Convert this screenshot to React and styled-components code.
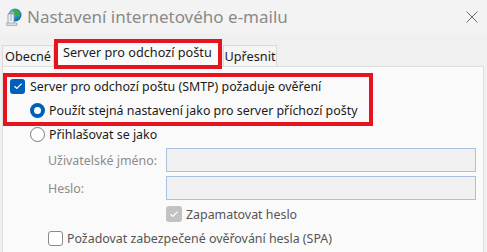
import styled, { createGlobalStyle } from "styled-components";

const GlobalStyle = createGlobalStyle`
  html, body {
    margin: 0;
    padding: 0;
    background: #f0f0f0;
  }
  body {
    font-family: "Noto Sans", "Open Sans", sans-serif;
    font-size: 12.4px;
    color: #1b1b1b;
    white-space: nowrap;
  }
`;

const Window = styled.div`
  width: 487px;
  height: 252px;
  overflow: hidden;
  display: flex;
  flex-direction: column;
  background: #f0f0f0;
`;

const TitleBar = styled.div`
  height: 33px;
  flex: none;
  display: flex;
  align-items: center;
  padding: 0 8px 0 5px;
  background: #f3f3f3;
`;

const Title = styled.span`
  margin-left: 5px;
  font-size: 17px;
  color: #8a8a8a;
  flex: 1;
`;

const CloseButton = styled.button`
  width: 14px;
  height: 14px;
  padding: 0;
  border: none;
  background: none;
  display: flex;
  align-items: center;
  justify-content: center;
`;

const TabArea = styled.div`
  flex: 1;
  display: flex;
  flex-direction: column;
  padding: 6px 3px 0 2px;
`;

const TabStrip = styled.div`
  display: flex;
  align-items: flex-end;
  height: 27px;
  flex: none;
`;

const Tab = styled.div`
  box-sizing: border-box;
  width: ${(p) => p.$w}px;
  height: 21px;
  display: flex;
  align-items: center;
  justify-content: center;
  border: 1px solid #dadada;
  border-bottom: none;
  background: #f5f5f5;
  font-size: 12.7px;
  margin-left: ${(p) => p.$gap || 0}px;
`;

const ActiveTab = styled.div`
  position: relative;
  z-index: 1;
  box-sizing: border-box;
  height: 30px;
  margin-bottom: -3px;
  padding: 0 0 4px 5px;
  width: 168px;
  display: flex;
  align-items: center;
  border: 4px solid #e5141f;
  background: #fafafa;
  font-size: 12.7px;
`;

const Panel = styled.div`
  flex: 1;
  box-sizing: border-box;
  border: 1px solid #dedede;
  border-bottom: none;
  background: #fafafa;
  display: flex;
  flex-direction: column;
  padding-top: 6px;
`;

const Highlight = styled.div`
  box-sizing: border-box;
  width: 370px;
  border: 4px solid #e5141f;
  padding: 1px 0 4px 3px;
  display: flex;
  flex-direction: column;
  gap: 8px;
`;

const Row = styled.div`
  display: flex;
  align-items: center;
  height: ${(p) => p.$h || 16}px;
  margin-left: ${(p) => p.$indent || 0}px;
  margin-top: ${(p) => p.$top || 0}px;
  gap: ${(p) => p.$gap ?? 4}px;
  color: ${(p) => p.$color || "#1b1b1b"};
`;

const Label = styled.span`
  width: 118px;
  flex: none;
  color: #8c8c8c;
`;

const Input = styled.div`
  box-sizing: border-box;
  width: 310px;
  height: 24px;
  background: #f0f0f0;
  border: 1px solid #a9c1de;
`;

const Check = styled.span`
  box-sizing: border-box;
  width: ${(p) => p.$size || 15}px;
  height: ${(p) => p.$size || 15}px;
  flex: none;
  border-radius: 3px;
  display: flex;
  align-items: center;
  justify-content: center;
  background: ${(p) =>
    p.$state === "on" ? "#005fb8" : p.$state === "disabled" ? "#c2c2c2" : "#ffffff"};
  border: ${(p) => (p.$state === "off" ? "1px solid #8a8a8a" : "none")};
`;

const Radio = styled.span`
  box-sizing: border-box;
  width: 15px;
  height: 15px;
  flex: none;
  border-radius: 50%;
  display: flex;
  align-items: center;
  justify-content: center;
  background: ${(p) => (p.$on ? "#005fb8" : "#ffffff")};
  border: ${(p) => (p.$on ? "none" : "1px solid #7a7a7a")};
  &::after {
    content: "";
    display: ${(p) => (p.$on ? "block" : "none")};
    width: 7px;
    height: 7px;
    border-radius: 50%;
    background: #ffffff;
  }
`;

const Tick = () => (
  <svg width="10" height="8" viewBox="0 0 10 8">
    <path d="M1.5 4.2 L3.9 6.4 L8.6 1.6" fill="none" stroke="#fff" strokeWidth="1.2" />
  </svg>
);

const AppIcon = () => (
  <svg width="17" height="18" viewBox="0 0 17 18">
    <defs>
      <radialGradient id="globe" cx="0.4" cy="0.35" r="0.7">
        <stop offset="0" stopColor="#7fd0ff" />
        <stop offset="0.5" stopColor="#1c8fd6" />
        <stop offset="1" stopColor="#0b5aa0" />
      </radialGradient>
    </defs>
    <circle cx="10" cy="7" r="6.5" fill="url(#globe)" />
    <path d="M7 2.5 C9 3 10 5 9 7 C11 7 13 8 14 10 C15 8 16 6 15 4 C13 2 10 1 7 2.5 Z" fill="#3aa845" />
    <path d="M3 6 L9 6 L9 16.5 L3 16.5 Z" fill="#eef1f5" stroke="#8c96a3" strokeWidth="0.8" />
    <path d="M4 5 C5 3.5 7 3.5 8 5 Z" fill="#c7cfd8" stroke="#8c96a3" strokeWidth="0.6" />
    <path d="M5 8 L7 8 M5 10 L7 10 M5 12 L7 12" stroke="#8c96a3" strokeWidth="0.8" />
    <path d="M1.5 15 L12 15 L12 17.5 L1.5 17.5 Z" fill="#d9dee5" stroke="#8c96a3" strokeWidth="0.6" />
  </svg>
);

const CloseIcon = () => (
  <svg width="12" height="12" viewBox="0 0 12 12">
    <path d="M0.5 0.5 L11.5 11.5 M11.5 0.5 L0.5 11.5" stroke="#6e6e6e" strokeWidth="1" />
  </svg>
);

export default function App() {
  return (
    <>
      <GlobalStyle />
      <Window>
        <TitleBar>
          <AppIcon />
          <Title>Nastavení internetového e-mailu</Title>
          <CloseButton aria-label="Zavřít">
            <CloseIcon />
          </CloseButton>
        </TitleBar>
        <TabArea>
          <TabStrip>
            <Tab $w={52}>Obecné</Tab>
            <ActiveTab>Server pro odchozí poštu</ActiveTab>
            <Tab $w={54} $gap={1}>Upřesnit</Tab>
          </TabStrip>
          <Panel>
            <Highlight>
              <Row $gap={5}>
                <Check $state="on">
                  <Tick />
                </Check>
                Server pro odchozí poštu (SMTP) požaduje ověření
              </Row>
              <Row $indent={20}>
                <Radio $on />
                Použít stejná nastavení jako pro server příchozí pošty
              </Row>
            </Highlight>
            <Row $indent={27}>
              <Radio />
              Přihlašovat se jako
            </Row>
            <Row $indent={45} $h={24} $top={6} $gap={0}>
              <Label>Uživatelské jméno:</Label>
              <Input />
            </Row>
            <Row $indent={45} $h={24} $top={4} $gap={0}>
              <Label>Heslo:</Label>
              <Input />
            </Row>
            <Row $indent={163} $top={6} $color="#555">
              <Check $state="disabled" $size={16}>
                <Tick />
              </Check>
              Zapamatovat heslo
            </Row>
            <Row $indent={45} $top={8} $color="#555">
              <Check $state="off" />
              Požadovat zabezpečené ověřování hesla (SPA)
            </Row>
          </Panel>
        </TabArea>
      </Window>
    </>
  );
}
